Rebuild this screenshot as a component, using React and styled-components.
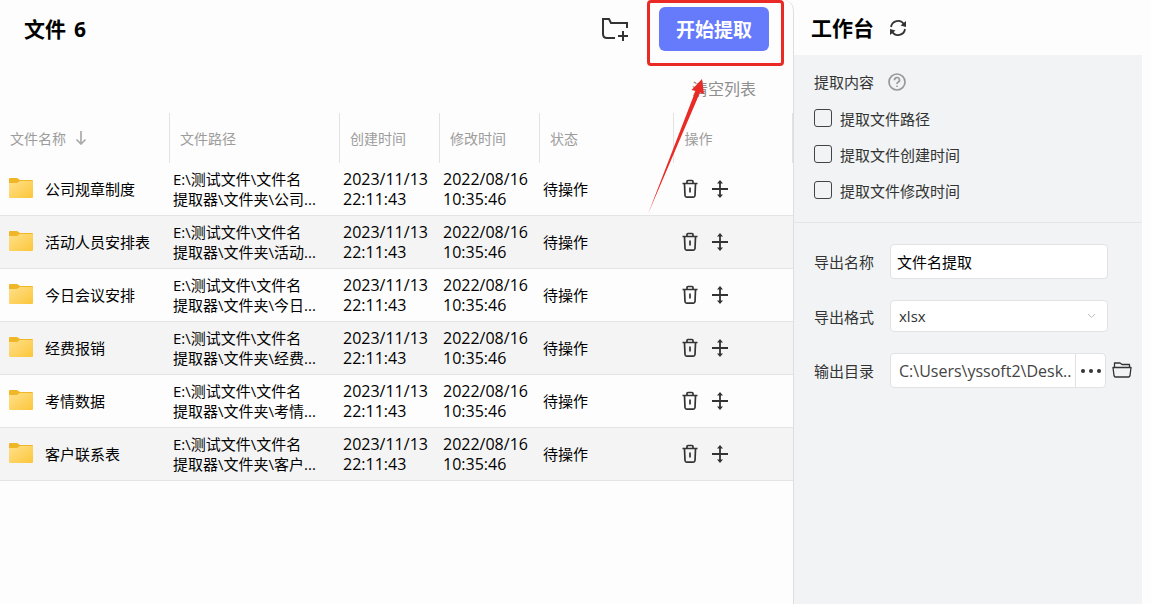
import React, { useState } from "react";
import styled, { createGlobalStyle } from "styled-components";

const GlobalStyle = createGlobalStyle`
  * { box-sizing: border-box; }
  body {
    margin: 0;
    background: #fdfdfd;
    color: #000;
    font-family: "Open Sans", "Noto Sans CJK SC", sans-serif;
    font-size: 15px;
  }
  button, input, select { font: inherit; color: inherit; }
`;

const Page = styled.div`
  display: flex;
  min-height: 100vh;
`;

const FilePanel = styled.main`
  flex: 1;
  min-width: 0;
  border-right: 1px solid #dcdee0;
  border-top-right-radius: 10px;
`;

const Toolbar = styled.header`
  display: flex;
  align-items: center;
  height: 58px;
  padding: 0 24px;
`;

const Title = styled.h1`
  display: flex;
  gap: 8px;
  margin: 0;
  font-size: 21px;
  line-height: 28px;
  font-weight: 700;
  color: #000;
`;

const IconButton = styled.button`
  display: inline-flex;
  align-items: center;
  justify-content: center;
  padding: 0;
  border: 0;
  background: none;
  color: ${(p) => p.$color || "#333"};
  cursor: pointer;
`;

const ToolbarActions = styled.div`
  display: flex;
  align-items: center;
  gap: 30px;
  margin-left: auto;
`;

const Highlighted = styled.div`
  position: relative;
`;

const StartButton = styled.button`
  display: block;
  width: 110px;
  height: 44px;
  padding: 0;
  border: 0;
  border-radius: 6px;
  background: #667afc;
  color: #fff;
  font-size: 19px;
  font-weight: 700;
  cursor: pointer;
`;

const HighlightFrame = styled.span`
  position: absolute;
  inset: -7px -15px -15px -12px;
  border: 3px solid #ea2a25;
  border-radius: 4px;
  pointer-events: none;
`;

const HighlightArrow = styled.svg`
  position: absolute;
  top: 68px;
  left: -14px;
  z-index: 1;
  pointer-events: none;
`;

const SubBar = styled.div`
  display: flex;
  justify-content: flex-end;
  padding: 19px 37px 11px;
`;

const ClearButton = styled.button`
  padding: 0;
  border: 0;
  background: none;
  color: #8e8e8e;
  font-size: 16px;
  line-height: 25px;
  cursor: pointer;
`;

const Table = styled.table`
  width: 100%;
  table-layout: fixed;
  border-collapse: separate;
  border-spacing: 0;
`;

const Col = styled.col`
  width: ${(p) => p.$width};
`;

const HeadCell = styled.th`
  height: 50px;
  padding: 0 10px;
  border-right: 1px solid #e2e2e2;
  color: #9c9c9c;
  font-size: 14px;
  font-weight: 400;
  text-align: left;
  white-space: nowrap;
`;

const SortLabel = styled.span`
  display: flex;
  align-items: center;
  gap: 9px;
`;

const Row = styled.tr`
  &:nth-child(even) { background: #f4f4f4; }
`;

const Cell = styled.td`
  height: 53px;
  padding: 0 3px;
  border-bottom: 1px solid #e4e4e4;
  font-size: ${(p) => (p.$time ? "16px" : "15px")};
  line-height: 20px;
  white-space: nowrap;
`;

const FileName = styled.span`
  display: flex;
  align-items: center;
  gap: 11px;
  padding-left: 5px;
`;

const RowActions = styled.span`
  display: flex;
  gap: 12px;
  padding-left: 4px;
`;

const SidePanel = styled.aside`
  display: flex;
  flex-direction: column;
  width: 357px;
  padding-right: 9px;
`;

const SideHeader = styled.header`
  display: flex;
  align-items: center;
  gap: 15px;
  height: 55px;
  padding: 0 17px;
`;

const SideBody = styled.div`
  flex: 1;
  background: #f1f3f5;
`;

const Options = styled.fieldset`
  display: flex;
  flex-direction: column;
  gap: 12px;
  margin: 0;
  padding: 14px 20px 20px;
  border: 0;
  border-bottom: 1px solid #e3e5e8;
  color: #333;
`;

const OptionsTitle = styled.div`
  display: flex;
  align-items: center;
  gap: 14px;
  height: 25px;
`;

const Option = styled.label`
  display: flex;
  align-items: center;
  gap: 8px;
  height: 24px;
`;

const Checkbox = styled.input`
  appearance: none;
  width: 18px;
  height: 18px;
  margin: 0;
  border: 1px solid #444;
  border-radius: 3px;
  &:checked { background: #667afc; }
`;

const Form = styled.form`
  display: flex;
  flex-direction: column;
  gap: 21px;
  padding: 21px 10px 0 20px;
  color: #333;
`;

const Field = styled.div`
  display: flex;
  align-items: center;
`;

const FieldLabel = styled.label`
  width: 76px;
  flex: none;
`;

const ControlBox = styled.div`
  display: flex;
  align-items: center;
  flex: 1;
  min-width: 0;
  height: ${(p) => p.$height};
  margin-right: ${(p) => p.$after};
  border: 1px solid #e0e2e5;
  border-radius: 4px;
  background: #fff;
`;

const TextInput = styled.input`
  flex: 1;
  min-width: 0;
  height: 100%;
  padding: 0 0 0 ${(p) => p.$inset};
  border: 0;
  border-radius: 4px;
  outline: 0;
  background: none;
  color: ${(p) => p.$color};
  font-size: ${(p) => p.$size};
`;

const Select = styled.select`
  appearance: none;
  flex: 1;
  height: 100%;
  padding: 0 8px;
  border: 0;
  outline: 0;
  background: none;
`;

const SelectArrow = styled.svg`
  margin-right: 11px;
  margin-left: -20px;
  pointer-events: none;
`;

const MoreButton = styled(IconButton)`
  width: 30px;
  height: 100%;
  border-left: 1px solid #e0e2e5;
`;

const AddFolderIcon = () => (
  <svg width="28" height="26" viewBox="0 0 28 26" fill="none" stroke="currentColor" strokeWidth="2">
    <path d="M26 12V7H10L8 3H2V18Q2 22 6 22H14" />
    <path d="M22 15V25M17 20H27" />
  </svg>
);

const RefreshIcon = () => (
  <svg width="18" height="18" viewBox="0 0 18 18" fill="none" stroke="currentColor" strokeWidth="1.8">
    <path d="M2 8A7 7 0 0 1 15 5.500M16 10A7 7 0 0 1 3 12.500" />
    <path d="M17 2V8L11.500 6.500ZM1 16V10L6.500 11.500Z" fill="currentColor" stroke="none" />
  </svg>
);

const HelpIcon = () => (
  <svg width="18" height="18" viewBox="0 0 18 18" fill="none" stroke="currentColor" strokeWidth="1.7">
    <circle cx="9" cy="9" r="8" />
    <path d="M6.500 7.200A2.500 2.500 0 1 1 10 9.300Q9 9.800 9 11" />
    <circle cx="9" cy="13.200" r="0.500" fill="currentColor" strokeWidth="0.8" />
  </svg>
);

const SortIcon = () => (
  <svg width="12" height="14" viewBox="0 0 12 14" fill="none" stroke="#aaa" strokeWidth="1.7">
    <path d="M6 0V12.500M1.500 8.500L6 13L10.500 8.500" />
  </svg>
);

const FolderIcon = () => (
  <svg width="26" height="22" viewBox="0 0 26 22">
    <defs>
      <linearGradient id="folder" x1="0" y1="0" x2="1" y2="1">
        <stop offset="0" stopColor="#ffe08a" />
        <stop offset="1" stopColor="#fbc63a" />
      </linearGradient>
    </defs>
    <path d="M2 0H9L12 2H24Q25 2 25 3V10H1V1Q1 0 2 0Z" fill="#efb728" />
    <path d="M1 5H9L12 3H24Q25 3 25 4V19Q25 20 24 20H2Q1 20 1 19Z" fill="url(#folder)" />
  </svg>
);

const TrashIcon = () => (
  <svg width="18" height="20" viewBox="0 0 18 20" fill="none" stroke="currentColor" strokeWidth="1.7">
    <path d="M1.500 4.500H16.500M6 4V2.500Q6 1.500 7 1.500H11Q12 1.500 12 2.500V4" />
    <path d="M3.500 5L4 16.500Q4.200 18.200 5.600 18.200H12.400Q13.800 18.200 14 16.500L14.500 5M9 8.500V13.500" />
  </svg>
);

const MoveIcon = () => (
  <svg width="18" height="20" viewBox="0 0 18 20" fill="none" stroke="currentColor" strokeWidth="1.8">
    <path d="M1 10H17M9 2V18" />
    <path d="M9 1L12 4.500H6ZM9 19L12 15.500H6Z" fill="currentColor" stroke="none" />
  </svg>
);

const DotsIcon = () => (
  <svg width="22" height="6" viewBox="0 0 22 6" fill="currentColor">
    <circle cx="3" cy="3" r="2" /><circle cx="11" cy="3" r="2" /><circle cx="19" cy="3" r="2" />
  </svg>
);

const OpenFolderIcon = () => (
  <svg width="20" height="20" viewBox="0 0 20 20" fill="none" stroke="currentColor" strokeWidth="1.3" strokeLinejoin="round">
    <path d="M2.500 6.500V2H8L10 3.500H17.500V6.500" />
    <path d="M1 6.500H19L18 14.500Q17.700 16 16.500 16H3.500Q2.300 16 2 14.500Z" />
  </svg>
);

const files = [
  ["公司规章制度", "公司..."],
  ["活动人员安排表", "活动..."],
  ["今日会议安排", "今日..."],
  ["经费报销", "经费..."],
  ["考情数据", "考情..."],
  ["客户联系表", "客户..."],
];

const columns = ["文件路径", "创建时间", "修改时间", "状态", "操作"];
const options = ["提取文件路径", "提取文件创建时间", "提取文件修改时间"];

export default function App() {
  const [name, setName] = useState("文件名提取");
  const [folder, setFolder] = useState("C:\\Users\\yssoft2\\Desk..");

  return (
    <>
      <GlobalStyle />
      <Page>
        <FilePanel>
          <Toolbar>
            <Title>文件 <span>{files.length}</span></Title>
            <ToolbarActions>
              <IconButton type="button" aria-label="添加文件夹"><AddFolderIcon /></IconButton>
              <Highlighted>
                <StartButton type="button">开始提取</StartButton>
                <HighlightFrame />
                <HighlightArrow width="64" height="140" viewBox="645 75 64 140" aria-hidden="true">
                  <path d="M648 214L695.500 91L691.500 90L702 79L704 94L700 92.500Z" fill="#ea2a25" />
                </HighlightArrow>
              </Highlighted>
            </ToolbarActions>
          </Toolbar>
          <SubBar><ClearButton type="button">清空列表</ClearButton></SubBar>
          <Table>
            <colgroup>
              <Col $width="170px" /><Col $width="170px" /><Col $width="100px" />
              <Col $width="100px" /><Col $width="17%" /><Col $width="15%" />
            </colgroup>
            <thead>
              <tr>
                <HeadCell scope="col"><SortLabel>文件名称 <SortIcon /></SortLabel></HeadCell>
                {columns.map((c) => <HeadCell key={c} scope="col">{c}</HeadCell>)}
              </tr>
            </thead>
            <tbody>
              {files.map(([file, tail]) => (
                <Row key={file}>
                  <Cell><FileName><FolderIcon />{file}</FileName></Cell>
                  <Cell>E:\测试文件\文件名<br />提取器\文件夹\{tail}</Cell>
                  <Cell $time>2023/11/13<br />22:11:43</Cell>
                  <Cell $time>2022/08/16<br />10:35:46</Cell>
                  <Cell>待操作</Cell>
                  <Cell>
                    <RowActions>
                      <IconButton type="button" aria-label="删除"><TrashIcon /></IconButton>
                      <IconButton type="button" aria-label="移动"><MoveIcon /></IconButton>
                    </RowActions>
                  </Cell>
                </Row>
              ))}
            </tbody>
          </Table>
        </FilePanel>
        <SidePanel>
          <SideHeader>
            <Title as="h2">工作台</Title>
            <IconButton type="button" aria-label="刷新"><RefreshIcon /></IconButton>
          </SideHeader>
          <SideBody>
            <Options aria-labelledby="options-title">
              <OptionsTitle>
                <span id="options-title">提取内容</span>
                <IconButton type="button" aria-label="帮助" $color="#999"><HelpIcon /></IconButton>
              </OptionsTitle>
              {options.map((o) => (
                <Option key={o}><Checkbox type="checkbox" />{o}</Option>
              ))}
            </Options>
            <Form>
              <Field>
                <FieldLabel htmlFor="name">导出名称</FieldLabel>
                <ControlBox $height="35px" $after="24px">
                  <TextInput id="name" $inset="6px" $size="15px" $color="#000" value={name} onChange={(e) => setName(e.target.value)} />
                </ControlBox>
              </Field>
              <Field>
                <FieldLabel htmlFor="format">导出格式</FieldLabel>
                <ControlBox $height="32px" $after="24px">
                  <Select id="format"><option>xlsx</option></Select>
                  <SelectArrow width="9" height="6" viewBox="0 0 9 6" fill="none" stroke="#bbb">
                    <path d="M1 1L4.500 4.500L8 1" />
                  </SelectArrow>
                </ControlBox>
              </Field>
              <Field>
                <FieldLabel htmlFor="folder">输出目录</FieldLabel>
                <ControlBox $height="35px" $after="6px">
                  <TextInput id="folder" $inset="8px" $size="16px" $color="#444" value={folder} onChange={(e) => setFolder(e.target.value)} />
                  <MoreButton type="button" aria-label="选择目录"><DotsIcon /></MoreButton>
                </ControlBox>
                <IconButton type="button" aria-label="打开目录"><OpenFolderIcon /></IconButton>
              </Field>
            </Form>
          </SideBody>
        </SidePanel>
      </Page>
    </>
  );
}
